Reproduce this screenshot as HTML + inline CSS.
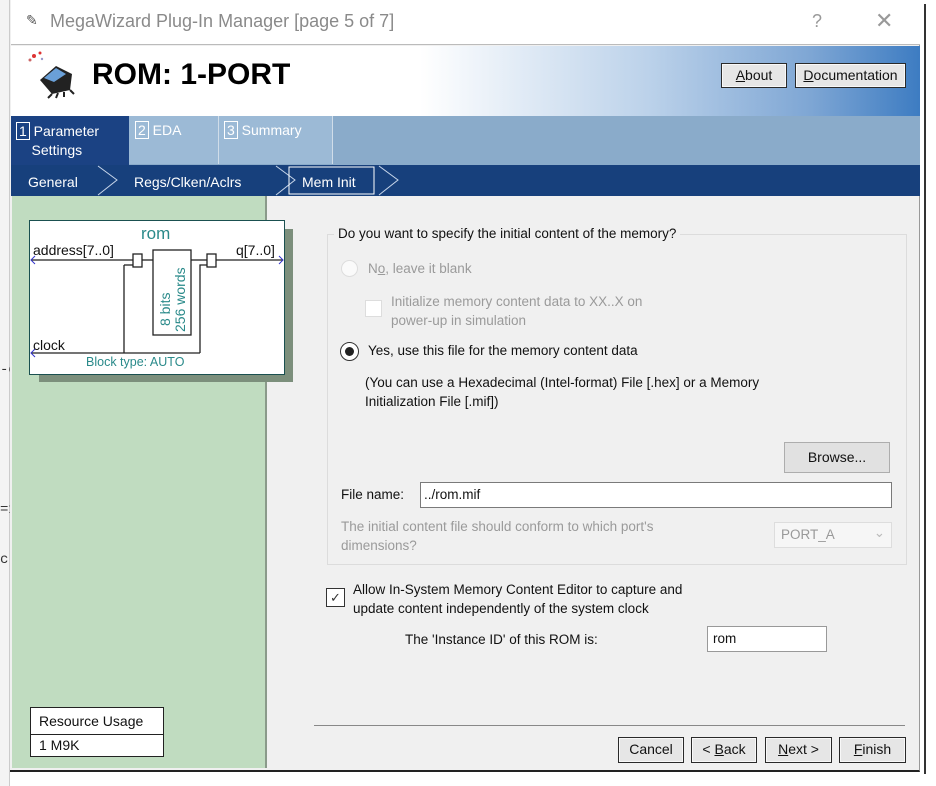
<!DOCTYPE html>
<html><head><meta charset="utf-8"><style>
*{box-sizing:border-box;margin:0;padding:0}
body{width:936px;height:786px;background:#fff;position:relative;overflow:hidden;font-family:"Liberation Sans","DejaVu Sans",sans-serif;font-size:13.5px;color:#111}
.a{position:absolute}
.btn{position:absolute;background:#e6e6e6;border:1px solid #2a2a2a;box-shadow:inset 0 0 0 1px #f8f8f8;text-align:center;font-size:14px;color:#111}
.gray{color:#9a9a9a}
u{text-decoration:underline}
</style></head><body>
<div class="a" style="left:0;top:0;width:10px;height:786px;background:#f4f4f4;border-right:1px solid #ccc"></div>
<div class="a" style="left:0;top:362px;font:14px 'Liberation Mono',monospace;color:#333">-c</div>
<div class="a" style="left:0;top:502px;font:14px 'Liberation Mono',monospace;color:#333">=1</div>
<div class="a" style="left:0;top:552px;font:14px 'Liberation Mono',monospace;color:#333">c</div>
<div class="a" style="left:10px;top:0;width:910px;height:772px;background:#f0f0f0;border-right:1px solid #999;border-bottom:2px solid #222"></div>
<div class="a" style="left:924px;top:4px;width:2px;height:770px;background:#333"></div>
<div class="a" style="left:11px;top:0;width:909px;height:45px;background:#fff;border-bottom:1px solid #bbb"></div>
<div class="a" style="left:26px;top:12px;font-size:14px;color:#555">✎</div>
<div class="a" style="left:50px;top:11px;font-size:18px;color:#8a8a8a">MegaWizard Plug-In Manager [page 5 of 7]</div>
<div class="a" style="left:812px;top:11px;font-size:18px;color:#999">?</div>
<div class="a" style="left:875px;top:8px;font-size:22px;color:#999">✕</div>
<div class="a" style="left:11px;top:46px;width:909px;height:70px;background:linear-gradient(90deg,#fff 0%,#fff 45%,#bcd2ea 70%,#7ea6d4 88%,#3d7cc2 100%)"></div>
<svg class="a" style="left:26px;top:50px" width="56" height="50" viewBox="0 0 56 50"><circle cx="8" cy="6" r="2" fill="#d33"/><circle cx="14" cy="3" r="1.5" fill="#d33"/><circle cx="4" cy="10" r="1.5" fill="#c66"/><circle cx="16" cy="9" r="1.2" fill="#99c"/><path d="M14 30 L30 16 L46 24 L44 40 L26 44 Z" fill="#222"/><path d="M18 28 L30 18 L40 24 L28 32 Z" fill="#6aa0d8"/><path d="M26 44 L22 48 M32 43 L30 48 M38 42 L38 47 M44 40 L48 44" stroke="#222" stroke-width="2"/></svg>
<div class="a" style="left:92px;top:58px;font-size:30px;font-weight:bold;color:#000">ROM: 1-PORT</div>
<div class="btn" style="left:721px;top:63px;width:66px;height:25px;line-height:22px"><u>A</u>bout</div>
<div class="btn" style="left:795px;top:63px;width:111px;height:25px;line-height:22px"><u>D</u>ocumentation</div>
<div class="a" style="left:11px;top:116px;width:909px;height:49px;background:#8aabca"></div>
<div class="a" style="left:11px;top:116px;width:118px;height:49px;background:#1b4283"></div>
<div class="a" style="left:129px;top:116px;width:90px;height:48px;background:#9cbad6;border-right:1px solid #d0dde9"></div>
<div class="a" style="left:219px;top:116px;width:114px;height:48px;background:#9cbad6;border-right:1px solid #d0dde9"></div>
<div class="a" style="left:16px;top:122px;color:#fff;font-size:14px;line-height:19px"><span style="border:1px solid #fff;padding:0 2px">1</span> Parameter<br>&nbsp;&nbsp;&nbsp;&nbsp;Settings</div>
<div class="a" style="left:135px;top:122px;color:#fff;font-size:14px"><span style="border:1px solid #fff;padding:0 2px">2</span> EDA</div>
<div class="a" style="left:224px;top:122px;color:#fff;font-size:14px"><span style="border:1px solid #fff;padding:0 2px">3</span> Summary</div>
<div class="a" style="left:11px;top:165px;width:909px;height:31px;background:#17407c"></div>
<svg class="a" style="left:11px;top:165px" width="420" height="31"><g stroke="#c8d6ea" fill="none" stroke-width="1"><path d="M87 1 L106 15 L87 30"/><path d="M265 1 L284 15 L265 30"/><path d="M368 1 L387 15 L368 30"/></g><rect x="278" y="2" width="85" height="27" fill="none" stroke="#fff"/></svg>
<div class="a" style="left:28px;top:174px;color:#fff;font-size:14px">General</div>
<div class="a" style="left:134px;top:174px;color:#fff;font-size:14px">Regs/Clken/Aclrs</div>
<div class="a" style="left:302px;top:174px;color:#fff;font-size:14px">Mem Init</div>
<div class="a" style="left:12px;top:196px;width:255px;height:572px;background:#c0dcc0;border-right:2px solid #8a9a8a"></div>
<div class="a" style="left:39px;top:229px;width:254px;height:153px;background:#7c8f7c"></div>
<div class="a" style="left:29px;top:220px;width:256px;height:155px;background:#fff;border:1px solid #1a5050"></div>
<svg class="a" style="left:29px;top:220px" width="256" height="155" viewBox="0 0 256 155">
<g stroke="#222" fill="none" stroke-width="1.3">
<path d="M2 40 L104 40"/><rect x="104" y="34" width="9" height="13" fill="#fff"/><path d="M113 40 L124 40"/>
<rect x="124" y="30" width="38" height="85"/>
<path d="M162 40 L178 40"/><rect x="178" y="34" width="9" height="13" fill="#fff"/><path d="M187 40 L254 40"/>
<path d="M95 45 L95 133 M2 133 L171 133 M171 133 L171 45 L178 45"/><path d="M95 45 L104 45"/>
</g>
<path d="M6 36 L2 40 L6 44 M250 36 L254 40 L250 44 M6 129 L2 133 L6 137" stroke="#33c" fill="none"/>
<text x="112" y="19" font-size="17" fill="#2a8a8a" font-family="Liberation Sans">rom</text>
<text x="4" y="35" font-size="14" fill="#111" font-family="Liberation Sans">address[7..0]</text>
<text x="207" y="35" font-size="14" fill="#111" font-family="Liberation Sans">q[7..0]</text>
<text x="4" y="130" font-size="14" fill="#111" font-family="Liberation Sans">clock</text>
<text x="57" y="146" font-size="12.5" fill="#2a8a8a" font-family="Liberation Sans">Block type: AUTO</text>
<text transform="translate(141,106) rotate(-90)" font-size="14" fill="#2a8a8a" font-family="Liberation Sans">8 bits</text>
<text transform="translate(156,112) rotate(-90)" font-size="14" fill="#2a8a8a" font-family="Liberation Sans">256 words</text>
</svg>
<div class="a" style="left:30px;top:707px;width:134px;height:50px;background:#fff;border:1px solid #222"></div>
<div class="a" style="left:30px;top:734px;width:134px;height:1px;background:#222"></div>
<div class="a" style="left:39px;top:713px;font-size:14px">Resource Usage</div>
<div class="a" style="left:39px;top:737px;font-size:14px">1 M9K</div>
<div class="a" style="left:327px;top:234px;width:580px;height:331px;border:1px solid #dcdcdc"></div>
<div class="a" style="left:334px;top:226px;background:#f0f0f0;padding:0 4px;font-size:13.5px">Do you want to specify the initial content of the memory?</div>
<div class="a" style="left:341px;top:260px;width:17px;height:17px;border-radius:50%;border:1px solid #ddd;background:#fafafa"></div>
<div class="a gray" style="left:368px;top:261px">N<u>o</u>, leave it blank</div>
<div class="a" style="left:365px;top:300px;width:17px;height:17px;border:1px solid #ddd;background:#fff"></div>
<div class="a gray" style="left:391px;top:292px;line-height:19px">Initialize memory content data to XX..X on<br>power-up in simulation</div>
<div class="a" style="left:340px;top:342px;width:19px;height:19px;border-radius:50%;border:1px solid #333;background:#fff"></div>
<div class="a" style="left:345px;top:347px;width:9px;height:9px;border-radius:50%;background:#222"></div>
<div class="a" style="left:368px;top:343px">Yes, use this file for the memory content data</div>
<div class="a" style="left:365px;top:373px;line-height:19px">(You can use a Hexadecimal (Intel-format) File [.hex] or a Memory<br>Initialization File [.mif])</div>
<div class="a" style="left:784px;top:442px;width:106px;height:31px;background:#e1e1e1;border:1px solid #adadad;text-align:center;line-height:29px;font-size:14px">Browse...</div>
<div class="a" style="left:341px;top:487px">File name:</div>
<div class="a" style="left:420px;top:482px;width:472px;height:26px;background:#fff;border:1px solid #7a7a7a;padding:4px 3px">../rom.mif</div>
<div class="a gray" style="left:341px;top:517px;line-height:19px">The initial content file should conform to which port's<br>dimensions?</div>
<div class="a" style="left:774px;top:522px;width:118px;height:26px;background:#f6f6f6;border:1px solid #ddd;color:#999;padding:4px 6px">PORT_A<span style="position:absolute;right:6px;top:2px;color:#bbb">⌄</span></div>
<div class="a" style="left:326px;top:588px;width:19px;height:19px;border:1px solid #333;background:#fff;font-size:13px;text-align:center;line-height:17px;color:#333">✓</div>
<div class="a" style="left:353px;top:580px;line-height:19px">Allow In-System Memory Content Editor to capture and<br>update content independently of the system clock</div>
<div class="a" style="left:405px;top:632px">The 'Instance ID' of this ROM is:</div>
<div class="a" style="left:707px;top:626px;width:120px;height:26px;background:#fff;border:1px solid #999;padding:4px 5px">rom</div>
<div class="a" style="left:314px;top:725px;width:591px;height:1px;background:#888"></div>
<div class="btn" style="left:618px;top:737px;width:66px;height:26px;line-height:23px">Cancel</div>
<div class="btn" style="left:691px;top:737px;width:66px;height:26px;line-height:23px">&lt; <u>B</u>ack</div>
<div class="btn" style="left:765px;top:737px;width:67px;height:26px;line-height:23px"><u>N</u>ext &gt;</div>
<div class="btn" style="left:839px;top:737px;width:67px;height:26px;line-height:23px"><u>F</u>inish</div>
</body></html>
